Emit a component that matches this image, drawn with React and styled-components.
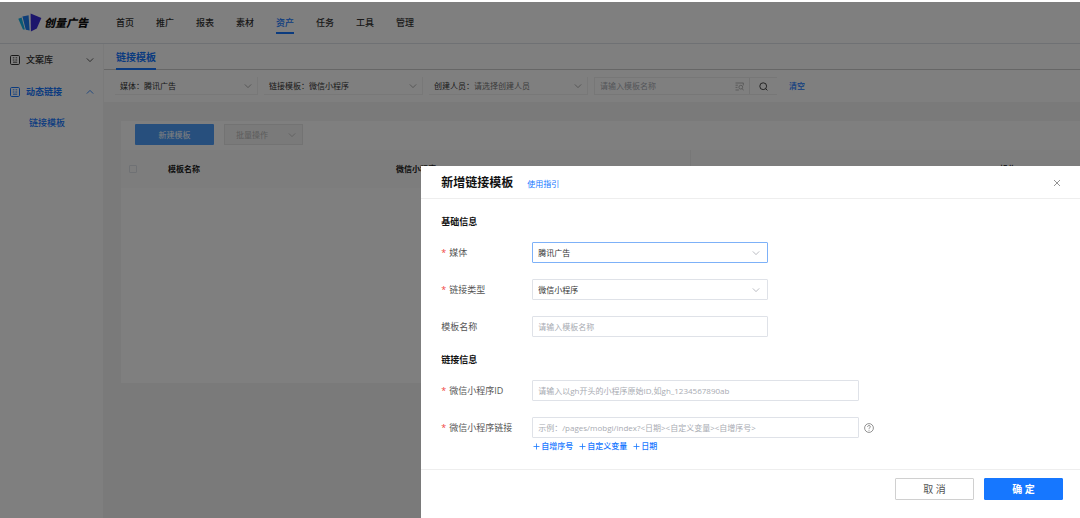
import React, { useState } from "react";
import styled, { createGlobalStyle, css } from "styled-components";

const theme = {
    blue: "#1677ff",
    text: "#333333",
    label: "#555555",
    hint: "#a8abb2",
    line: "#dfe2e8",
    page: "#f4f5f5",
    red: "#f04343",
}

const GlobalStyle = createGlobalStyle`
    * {
        box-sizing: border-box;
    }

    body {
        margin: 0;
        background: #ffffff;
        color: ${theme.text};
    }

    body, button, input, select {
        font-family: "Open Sans", "Noto Sans CJK SC", sans-serif;
        font-size: 8px;
        line-height: 12px;
    }

    a {
        color: inherit;
        text-decoration: none;
    }
`

const Page = styled.div`
    display: flex;
    flex-direction: column;
    min-height: 100vh;
    padding-top: 2px;
`

const Header = styled.header`
    display: flex;
    align-items: center;
    height: 42px;
    padding-left: 18px;
    border-bottom: 1px solid ${theme.line};
`

const Logo = styled.a`
    display: flex;
    align-items: center;
    gap: 2px;
    width: 98px;
    font-size: 11px;
    font-weight: 900;
    font-style: italic;
    line-height: 16px;
    color: #111111;
`

const Nav = styled.nav`
    display: flex;
    gap: 22px;
`

const NavLink = styled.a`
    padding: 4px 0 2px;
    font-size: 9px;
    font-weight: 500;
    line-height: 14px;
    color: ${({ $active }) => ($active ? theme.blue : theme.text)};
    border-bottom: 2px solid ${({ $active }) => ($active ? theme.blue : "transparent")};
`

const Body = styled.div`
    display: flex;
    flex: 1;
`

const Sidebar = styled.aside`
    flex: none;
    width: 104px;
    border-right: 1px solid #f4f4f4;
`

const MenuItem = styled.button`
    display: flex;
    align-items: center;
    gap: 6px;
    width: 100%;
    height: 32px;
    padding: 0 9px 0 10px;
    border: 0;
    background: none;
    font-size: 9px;
    font-weight: ${({ $active }) => ($active ? 700 : 500)};
    color: ${({ $active }) => ($active ? theme.blue : theme.text)};

    svg:last-child {
        margin-left: auto;
    }
`

const SubLink = styled.a`
    display: block;
    padding: 8px 0 8px 29px;
    font-size: 9px;
    line-height: 14px;
    font-weight: 500;
    color: ${theme.blue};
`

const Main = styled.main`
    flex: 1;
    min-width: 0;
    background: ${theme.page};
`

const TabBar = styled.div`
    display: flex;
    height: 26px;
    padding-left: 12px;
    background: #ffffff;
    border-bottom: 1px solid #cccccc;
`

const Tab = styled.a`
    height: 26px;
    font-size: 10px;
    font-weight: 700;
    line-height: 26px;
    color: ${theme.blue};
    box-shadow: inset 0 -2px ${theme.blue};
`

const Filters = styled.div`
    display: flex;
    align-items: center;
    gap: 6px;
    height: 32px;
    padding-left: 11px;
    background: #ffffff;
`

const Filter = styled.label`
    display: flex;
    align-items: center;
    width: ${({ $narrow }) => ($narrow ? 143 : 159)}px;
    height: 18px;
    padding: 0 5px;
    border-right: 1px solid #f0f0f0;
    border-bottom: 1px solid #f0f0f0;

    svg {
        color: #999999;
    }
`

const PlainSelect = styled.select`
    flex: 1;
    min-width: 0;
    padding: 0;
    border: 0;
    outline: 0;
    appearance: none;
    background: none;
    color: ${({ $muted }) => ($muted ? "#777777" : "#333333")};
`

const Search = styled.div`
    display: flex;
    align-items: center;
    width: 183px;
    height: 18px;
    border: 1px solid #eeeeee;
    border-right: 0;
    color: #999999;
`

const SearchInput = styled.input`
    flex: 1;
    min-width: 0;
    padding: 0 5px;
    border: 0;
    outline: 0;
    background: none;

    &::placeholder {
        color: ${theme.hint};
    }
`

const SearchButton = styled.button`
    display: flex;
    align-items: center;
    justify-content: center;
    width: 28px;
    height: 16px;
    margin-left: 5px;
    padding: 0;
    border: 0;
    border-left: 1px solid #e8e8e8;
    background: none;
    color: ${theme.text};
`

const TextButton = styled.button`
    padding: 0;
    border: 0;
    background: none;
    font-weight: 500;
    color: ${theme.blue};
`

const ClearButton = styled(TextButton)`
    margin-left: 6px;
`

const Panel = styled.section`
    height: 262px;
    margin: 19px 0 0 17px;
    background: #ffffff;
`

const Toolbar = styled.div`
    display: flex;
    gap: 10px;
    padding: 3px 14px 5px;
`

const CreateButton = styled.button`
    width: 79px;
    height: 21px;
    border: 0;
    border-radius: 1px;
    background: #4f9ffb;
    color: #ffffff;
`

const BatchButton = styled.button`
    display: flex;
    align-items: center;
    justify-content: space-between;
    width: 79px;
    height: 21px;
    padding: 0 6px 0 11px;
    border: 1px solid #e6e6e6;
    background: #f5f5f5;
    color: #b8b8b8;
`

const Table = styled.table`
    width: 100%;
    table-layout: fixed;
    border-collapse: collapse;

    th {
        height: 38px;
        padding: 0;
        background: #fafafa;
        text-align: left;
        color: #222222;
    }
`

const DividedTh = styled.th`
    border-right: 1px solid #eeeeee;
`

const CheckBox = styled.input`
    display: block;
    width: 8px;
    height: 8px;
    margin: 0 0 0 8px;
    appearance: none;
    border: 1px solid #dfe2e8;
    border-radius: 1px;
`

const Mask = styled.div`
    position: fixed;
    inset: 2px 0 0;
    background: rgba(0, 0, 0, 0.5);
`

const Drawer = styled.section`
    position: fixed;
    top: 166px;
    right: 0;
    bottom: 0;
    left: 39%;
    display: flex;
    flex-direction: column;
    background: #ffffff;
`

const DrawerHead = styled.div`
    display: flex;
    align-items: center;
    gap: 14px;
    height: 33px;
    padding: 2px 19px 0 20px;
    border-bottom: 1px solid #eeeeee;
`

const DrawerTitle = styled.h2`
    margin: 0;
    font-size: 12px;
    line-height: 18px;
    color: #111111;
`

const HelpLink = styled.a`
    padding-top: 2px;
    color: ${theme.blue};
`

const CloseButton = styled.button`
    display: flex;
    margin-left: auto;
    padding: 0;
    border: 0;
    background: none;
    color: #888888;
`

const Form = styled.form`
    flex: 1;
    padding: 16px 20px 0;
`

const SectionTitle = styled.h3`
    margin: 0 0 13px;
    font-size: 9px;
    line-height: 14px;
    color: #111111;
`

const FormRow = styled.div`
    display: flex;
    align-items: center;
    height: 21px;
    margin-bottom: 16px;
`

const Label = styled.label`
    flex: none;
    width: 91px;
    font-size: 9px;
    color: ${theme.label};
`

const Required = styled.span`
    margin-right: 3px;
    color: ${theme.red};
`

const fieldBox = css`
    width: ${({ $wide }) => ($wide ? 327 : 236)}px;
    height: 21px;
    border: 1px solid ${({ $focused }) => ($focused ? "#7db1f8" : theme.line)};
    border-radius: 1px;
    background: #ffffff;
`

const SelectBox = styled.div`
    ${fieldBox}
    display: flex;
    align-items: center;
    padding: 0 7px 0 5px;
    color: #a8abb2;
`

const TextInput = styled.input`
    ${fieldBox}
    padding: 0 5px;
    outline: 0;

    &::placeholder {
        color: ${theme.hint};
        opacity: 1;
    }
`

const Tip = styled.span`
    display: flex;
    margin-left: 5px;
    color: #777777;
`

const Inserts = styled.div`
    display: flex;
    gap: 6px;
    margin: -14px 0 0 92px;
`

const InsertButton = styled(TextButton)`
    display: flex;
    align-items: center;
    gap: 1px;
`

const DrawerFoot = styled.div`
    display: flex;
    justify-content: flex-end;
    gap: 10px;
    height: 49px;
    padding: 8px 17px 0 0;
    border-top: 1px solid #eeeeee;
`

const FootButton = styled.button`
    width: 79px;
    height: 22px;
    border: 1px solid ${({ $primary }) => ($primary ? theme.blue : "#d0d0d0")};
    border-radius: 1px;
    background: ${({ $primary }) => ($primary ? theme.blue : "#ffffff")};
    color: ${({ $primary }) => ($primary ? "#ffffff" : "#555555")};
    font-size: 10px;
    font-weight: ${({ $primary }) => ($primary ? 700 : 400)};
`

function Chevron({ up }) {
    return (
        <svg width="8" height="8" viewBox="0 0 8 8" fill="none" stroke="currentColor" strokeWidth="0.8" aria-hidden="true">
            <path d={up ? "M0.8 5.6 4 2.4 7.2 5.6" : "M0.8 2.4 4 5.6 7.2 2.4"} />
        </svg>
    )
}

function LogoMark() {
    return (
        <svg width="24" height="19" viewBox="0 0 24 19" aria-hidden="true">
            <path d="M0.3 5.8 3.6 4.4 6.9 16.6 5 16.6Z" fill="#16b4e8" />
            <path d="M4.4 3.6 10.6 2.2 11.6 17.6 7.8 16.8Z" fill="#1c7df2" />
            <path d="M12.6 0.6 23.4 5 18.8 15.4 12.9 18.4Z" fill="#3a2cd8" />
        </svg>
    )
}

function DocIcon() {
    return (
        <svg width="10" height="10" viewBox="0 0 10 10" fill="none" stroke="currentColor" aria-hidden="true">
            <rect x="0.5" y="0.5" width="9" height="9" rx="1.2" />
            <path d="M2.8 2.8h1.6M5.6 2.8h1.6M2.8 5h1.6M5.4 5h1.8M3 7.2h4.2" strokeWidth="0.9" />
        </svg>
    )
}

function SearchIcon() {
    return (
        <svg width="9" height="9" viewBox="0 0 9 9" fill="none" stroke="currentColor" strokeWidth="0.9" aria-hidden="true">
            <circle cx="4.2" cy="4.2" r="3.4" />
            <path d="M6.6 6.6 8.4 8.4" />
        </svg>
    )
}

function ListSearchIcon() {
    return (
        <svg width="9" height="9" viewBox="0 0 9 9" fill="none" stroke="currentColor" strokeWidth="0.7" aria-hidden="true">
            <path d="M0.5 1h8M0.5 3.2h2.4M0.5 5.4h2M0.5 8h3.4M8.3 1v2.4" />
            <circle cx="5.8" cy="5.2" r="1.9" />
            <path d="M7.2 6.6 8.6 8.4" />
        </svg>
    )
}

function CloseIcon() {
    return (
        <svg width="8" height="8" viewBox="0 0 8 8" fill="none" stroke="currentColor" strokeWidth="0.9" aria-hidden="true">
            <path d="M1 1 7 7M7 1 1 7" />
        </svg>
    )
}

function PlusIcon() {
    return (
        <svg width="7" height="7" viewBox="0 0 7 7" fill="none" stroke="currentColor" strokeWidth="0.8" aria-hidden="true">
            <path d="M0.5 3.5h6M3.5 0.5v6" />
        </svg>
    )
}

function HelpIcon() {
    return (
        <svg width="10" height="10" viewBox="0 0 10 10" fill="none" stroke="currentColor" strokeWidth="0.8" aria-hidden="true">
            <circle cx="5" cy="5" r="4.4" />
            <path d="M3.6 4c0-1 .6-1.5 1.4-1.5s1.4.5 1.4 1.3c0 .9-1.4 1-1.4 2M5 6.8v.9" />
        </svg>
    )
}

const navItems = ["首页", "推广", "报表", "素材", "资产", "任务", "工具", "管理"]

function App() {
    const [formData, setFormData] = useState({ media: "腾讯广告", type: "微信小程序", name: "", appId: "", link: "" })

    const handleChange = (e) => {
        setFormData({
            ...formData, [e.target.name]: e.target.value,
        });
    };

    const addToLink = (part) => {
        setFormData({ ...formData, link: `${formData.link}<${part}>` })
    }

    return (
        <>
            <GlobalStyle />
            <Page>
                <Header>
                    <Logo href="#"><LogoMark />创量广告</Logo>
                    <Nav>
                        {navItems.map((item) => (
                            <NavLink key={item} href="#" $active={item === "资产"}>{item}</NavLink>
                        ))}
                    </Nav>
                </Header>
                <Body>
                    <Sidebar>
                        <MenuItem type="button"><DocIcon />文案库<Chevron /></MenuItem>
                        <MenuItem type="button" $active><DocIcon />动态链接<Chevron up /></MenuItem>
                        <SubLink href="#">链接模板</SubLink>
                    </Sidebar>
                    <Main>
                        <TabBar>
                            <Tab href="#">链接模板</Tab>
                        </TabBar>
                        <Filters>
                            <Filter $narrow>
                                媒体：
                                <PlainSelect><option>腾讯广告</option></PlainSelect>
                                <Chevron />
                            </Filter>
                            <Filter>
                                链接模板：
                                <PlainSelect><option>微信小程序</option></PlainSelect>
                                <Chevron />
                            </Filter>
                            <Filter>
                                创建人员：
                                <PlainSelect $muted><option>请选择创建人员</option></PlainSelect>
                                <Chevron />
                            </Filter>
                            <Search>
                                <SearchInput type="text" aria-label="模板名称" placeholder="请输入模板名称" />
                                <ListSearchIcon />
                                <SearchButton type="button" aria-label="搜索"><SearchIcon /></SearchButton>
                            </Search>
                            <ClearButton type="button">清空</ClearButton>
                        </Filters>
                        <Panel>
                            <Toolbar>
                                <CreateButton type="button">新建模板</CreateButton>
                                <BatchButton type="button">批量操作<Chevron /></BatchButton>
                            </Toolbar>
                            <Table>
                                <colgroup>
                                    <col width="47" />
                                    <col width="228" />
                                    <col width="294" />
                                    <col />
                                    <col width="80" />
                                </colgroup>
                                <thead>
                                    <tr>
                                        <th><CheckBox type="checkbox" aria-label="全选" /></th>
                                        <th>模板名称</th>
                                        <DividedTh>微信小程序ID</DividedTh>
                                        <th></th>
                                        <th>操作</th>
                                    </tr>
                                </thead>
                            </Table>
                        </Panel>
                    </Main>
                </Body>
            </Page>
            <Mask />
            <Drawer role="dialog" aria-labelledby="drawer-title">
                <DrawerHead>
                    <DrawerTitle id="drawer-title">新增链接模板</DrawerTitle>
                    <HelpLink href="#">使用指引</HelpLink>
                    <CloseButton type="button" aria-label="关闭"><CloseIcon /></CloseButton>
                </DrawerHead>
                <Form>
                    <SectionTitle>基础信息</SectionTitle>
                    <FormRow>
                        <Label htmlFor="media"><Required>*</Required>媒体</Label>
                        <SelectBox $focused>
                            <PlainSelect id="media" name="media" value={formData.media} onChange={handleChange}>
                                <option>腾讯广告</option>
                            </PlainSelect>
                            <Chevron />
                        </SelectBox>
                    </FormRow>
                    <FormRow>
                        <Label htmlFor="type"><Required>*</Required>链接类型</Label>
                        <SelectBox>
                            <PlainSelect id="type" name="type" value={formData.type} onChange={handleChange}>
                                <option>微信小程序</option>
                            </PlainSelect>
                            <Chevron />
                        </SelectBox>
                    </FormRow>
                    <FormRow>
                        <Label htmlFor="name">模板名称</Label>
                        <TextInput id="name" type="text" name="name" placeholder="请输入模板名称" value={formData.name} onChange={handleChange} />
                    </FormRow>
                    <SectionTitle>链接信息</SectionTitle>
                    <FormRow>
                        <Label htmlFor="appId"><Required>*</Required>微信小程序ID</Label>
                        <TextInput $wide id="appId" type="text" name="appId" placeholder="请输入以gh开头的小程序原始ID,如gh_1234567890ab" value={formData.appId} onChange={handleChange} />
                    </FormRow>
                    <FormRow>
                        <Label htmlFor="link"><Required>*</Required>微信小程序链接</Label>
                        <TextInput $wide id="link" type="text" name="link" placeholder="示例：/pages/mobgi/index?<日期><自定义变量><自增序号>" value={formData.link} onChange={handleChange} />
                        <Tip><HelpIcon /></Tip>
                    </FormRow>
                    <Inserts>
                        {["自增序号", "自定义变量", "日期"].map((part) => (
                            <InsertButton key={part} type="button" onClick={() => addToLink(part)}><PlusIcon />{part}</InsertButton>
                        ))}
                    </Inserts>
                </Form>
                <DrawerFoot>
                    <FootButton type="button">取 消</FootButton>
                    <FootButton type="button" $primary>确 定</FootButton>
                </DrawerFoot>
            </Drawer>
        </>
    );
}

export default App;
